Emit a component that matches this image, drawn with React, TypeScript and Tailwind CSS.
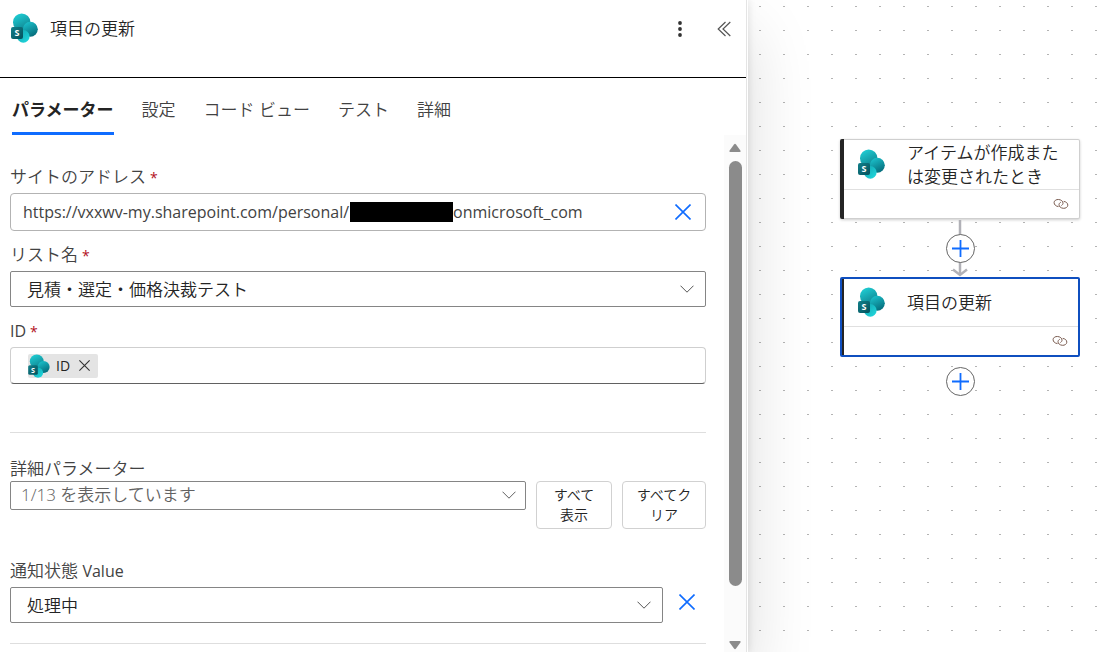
import { useId, useState } from "react";
import type { ReactNode } from "react";
import clsx from "clsx";

const tabs = ["パラメーター", "設定", "コード ビュー", "テスト", "詳細"];

function SharePointIcon({ className }: { className?: string }) {
  const id = useId();

  return (
    <svg viewBox="0 0 27 30" className={className} aria-hidden="true">
      <defs>
        <linearGradient id={`${id}a`} x1="0.2" y1="0" x2="0.7" y2="1">
          <stop offset="0" stopColor="#1fd0d6" />
          <stop offset="1" stopColor="#0f7f8c" />
        </linearGradient>
        <linearGradient id={`${id}b`} x1="0.2" y1="0" x2="0.7" y2="1">
          <stop offset="0" stopColor="#1cc3cd" />
          <stop offset="1" stopColor="#056a79" />
        </linearGradient>
        <linearGradient id={`${id}c`} x1="0" y1="0" x2="1" y2="1">
          <stop offset="0" stopColor="#0fa3ae" />
          <stop offset="1" stopColor="#22dbe0" />
        </linearGradient>
        <linearGradient id={`${id}d`} x1="0" y1="0" x2="1" y2="1">
          <stop offset="0" stopColor="#12808a" />
          <stop offset="1" stopColor="#04515c" />
        </linearGradient>
      </defs>
      <circle cx="10.7" cy="9.2" r="8.7" fill={`url(#${id}a)`} />
      <circle cx="19.3" cy="16.2" r="7.5" fill={`url(#${id}b)`} />
      <circle cx="12.3" cy="23.4" r="6.3" fill={`url(#${id}c)`} />
      <rect x="0" y="14" width="12" height="12" rx="2" fill={`url(#${id}d)`} />
      <text x="6" y="23.2" textAnchor="middle" fill="#fff" fontSize="9" fontWeight="700" fontFamily="Open Sans, sans-serif">
        S
      </text>
    </svg>
  );
}

function ChevronDown({ className }: { className?: string }) {
  return (
    <svg viewBox="0 0 14 8" className={clsx("pointer-events-none absolute h-2 w-3.5", className)} fill="none" stroke="currentColor" aria-hidden="true">
      <path d="M0.5 0.7 7 7.2l6.5-6.5" />
    </svg>
  );
}

function CloseIcon({ className }: { className?: string }) {
  return (
    <svg viewBox="0 0 16 16" className={className} fill="none" stroke="currentColor" strokeWidth="1.6" aria-hidden="true">
      <path d="M0.5 0.5l15 15M15.5 0.5l-15 15" />
    </svg>
  );
}

function FieldLabel({ htmlFor, required, children }: { htmlFor: string; required?: boolean; children: ReactNode }) {
  return (
    <label htmlFor={htmlFor} className="block leading-6 text-[#424242]">
      {children}
      {required && <span className="ml-1 text-[14px] leading-none font-normal text-[#b10e1c]">*</span>}
    </label>
  );
}

function ScrollBar() {
  return (
    <div className="flex w-[22px] shrink-0 flex-col items-center gap-2 bg-[#fbfbfb] pt-2 pb-0.5 text-[#8b8b8b]" aria-hidden="true">
      <svg viewBox="0 0 12 10" className="h-2.5 w-3" fill="currentColor">
        <path d="M5 1.4q1-1.2 2 0l4.4 6q.8 1.6-.8 1.6H1.4q-1.6 0-.8-1.6z" />
      </svg>
      <div className="min-h-0 w-[13px] flex-1 rounded-full bg-[#8b8b8b]" />
      <div className="h-[38px]" />
      <svg viewBox="0 0 12 10" className="h-2.5 w-3" fill="currentColor">
        <path d="M5 8.6q1 1.2 2 0l4.4-6q.8-1.6-.8-1.6H1.4q-1.6 0-.8 1.6z" />
      </svg>
    </div>
  );
}

function Panel() {
  const [active, setActive] = useState(tabs[0]);
  const [address, setAddress] = useState(
    "https://vxxwv-my.sharepoint.com/personal/\u2003\u2003\u2003\u2003\u2003\u2003\u2002onmicrosoft_com"
  );

  return (
    <section className="z-10 flex h-full w-[67.7%] shrink-0 flex-col border-r border-white bg-white shadow-[0_0_8px_rgba(0,0,0,0.12),0_32px_64px_rgba(0,0,0,0.14)]">
      <div className="flex min-h-0 flex-1 flex-col border-r border-[#e4e4e4]">
        <header className="flex h-[78px] shrink-0 items-start border-b border-black pt-[13px] pr-1.5 pl-[11px]">
          <SharePointIcon className="h-[30px] w-[27px]" />
          <h1 className="ml-3 flex-1 leading-8 text-[#242424]">項目の更新</h1>
          <button type="button" aria-label="その他" className="flex size-8 items-center justify-center text-[#333]">
            <svg viewBox="0 0 4 16" className="h-4 w-1" fill="currentColor" aria-hidden="true">
              <circle cx="2" cy="2" r="1.9" />
              <circle cx="2" cy="8" r="1.9" />
              <circle cx="2" cy="14" r="1.9" />
            </svg>
          </button>
          <button type="button" aria-label="折りたたむ" className="ml-3 flex size-8 items-center justify-center text-[#555]">
            <svg viewBox="0 0 14 16" className="h-4 w-3.5" fill="none" stroke="currentColor" strokeWidth="1.2" aria-hidden="true">
              <path d="M8.5 1 1.2 8l7.3 7M13.3 1 6 8l7.3 7" />
            </svg>
          </button>
        </header>

        <div role="tablist" className="flex h-[57px] shrink-0 gap-7 pl-3">
          {tabs.map((tab) => (
            <button
              key={tab}
              type="button"
              role="tab"
              aria-selected={tab === active}
              onClick={() => setActive(tab)}
              className={clsx(
                "border-b-3 pt-2.5 pb-0 whitespace-nowrap",
                tab === active ? "border-[#0f6cff] font-bold text-[#242424]" : "border-transparent text-[#424242]"
              )}
            >
              {tab}
            </button>
          ))}
        </div>

        <div className="flex min-h-0 flex-1">
          <form className="min-w-0 flex-1 overflow-hidden pt-[30px] pr-[18px] pl-2.5">
            <FieldLabel htmlFor="site" required>サイトのアドレス</FieldLabel>
            <div className="relative mt-1 flex h-[38px] items-center rounded-[4px] border border-[#b3b3b3] pr-3">
              <input
                id="site"
                value={address}
                onChange={(e) => setAddress(e.target.value)}
                className="h-full min-w-0 flex-1 pl-3 font-['Open_Sans'] text-[16px] font-normal text-[#424242] outline-none"
              />
              <div className="absolute top-2 left-[339px] h-5 w-[103px] bg-black" />
              <button type="button" aria-label="クリア" className="flex size-5 items-center justify-center text-[#0f6cff]">
                <CloseIcon className="size-4" />
              </button>
            </div>

            <div className="mt-3">
              <FieldLabel htmlFor="list" required>リスト名</FieldLabel>
              <div className="relative mt-1">
                <select id="list" className="h-9 w-full appearance-none rounded-[2px] border border-[#858585] bg-white pt-0.5 pl-4 text-[#242424]">
                  <option>見積・選定・価格決裁テスト</option>
                </select>
                <ChevronDown className="top-3.5 right-3 text-[#555]" />
              </div>
            </div>

            <div className="mt-3">
              <FieldLabel htmlFor="item-id" required>
                <span className="text-[16px] leading-none font-normal">ID</span>
              </FieldLabel>
              <div className="mt-1 flex h-[37px] items-center rounded-[4px] border border-[#cfcfcf] border-b-[#616161] pl-[17px]">
                <span className="flex h-6 items-center rounded-[2px] bg-[#e4e4e4] pr-2">
                  <SharePointIcon className="h-6 w-[22px]" />
                  <span className="ml-1.5 font-['Open_Sans'] text-[14px] font-normal text-[#242424]">ID</span>
                  <button type="button" aria-label="ID を削除" className="ml-2 flex size-3 items-center justify-center text-[#333]">
                    <CloseIcon className="size-[11px]" />
                  </button>
                </span>
                <input id="item-id" className="h-full min-w-0 flex-1 px-2 outline-none" />
              </div>
            </div>

            <hr className="mt-12 border-[#dedede]" />

            <div className="mt-6">
              <FieldLabel htmlFor="advanced">詳細パラメーター</FieldLabel>
              <div className="flex items-start gap-2.5">
                <div className="relative flex-1">
                  <select id="advanced" className="h-[29px] w-full appearance-none rounded-[2px] border border-[#858585] bg-white pb-0.5 pl-2.5 text-[#616161]">
                    <option>1/13 を表示しています</option>
                  </select>
                  <ChevronDown className="top-2.5 right-2.5 text-[#616161]" />
                </div>
                <button type="button" className="h-12 w-[76px] rounded-[4px] border border-[#d1d1d1] px-4 text-[14px] leading-5 text-[#242424]">
                  すべて表示
                </button>
                <button type="button" className="h-12 w-[84px] rounded-[4px] border border-[#d1d1d1] px-3 text-[14px] leading-5 text-[#242424]">
                  すべてクリア
                </button>
              </div>
            </div>

            <div className="mt-[30px]">
              <FieldLabel htmlFor="status">
                通知状態 <span className="text-[16px] leading-none font-normal">Value</span>
              </FieldLabel>
              <div className="mt-1 flex items-center">
                <div className="relative flex-1">
                  <select id="status" className="h-9 w-full appearance-none rounded-[2px] border border-[#858585] bg-white pt-0.5 pl-4 text-[#242424]">
                    <option>処理中</option>
                  </select>
                  <ChevronDown className="top-3.5 right-3 text-[#555]" />
                </div>
                <button type="button" aria-label="パラメーターを削除" className="mr-[9px] mb-1.5 ml-3.5 flex size-5 items-center justify-center text-[#0f6cff]">
                  <CloseIcon className="size-4" />
                </button>
              </div>
            </div>

            <hr className="mt-5 border-[#dedede]" />
          </form>
          <ScrollBar />
        </div>
      </div>
    </section>
  );
}

function AddButton() {
  return (
    <button type="button" aria-label="アクションの追加" className="flex size-[29px] items-center justify-center rounded-full border border-[#666] bg-white text-[#0f6cff]">
      <svg viewBox="0 0 17 17" className="size-[17px]" stroke="currentColor" strokeWidth="1.8" aria-hidden="true">
        <path d="M8.5 0v17M0 8.5h17" />
      </svg>
    </button>
  );
}

function NodeCard({ title, selected }: { title: string; selected?: boolean }) {
  return (
    <article
      className={clsx(
        "flex h-20 w-60 rounded-[2px] bg-white",
        selected ? "border-2 border-[#0f4fbf]" : "border border-l-0 border-[#cfcfcf] shadow-[0_1px_3px_rgba(0,0,0,0.2)]"
      )}
    >
      <div className={clsx("bg-[#242424]", selected ? "w-0.5" : "-my-px w-1 rounded-l-[2px]")} />
      <div className="flex flex-1 flex-col">
        <div className="flex flex-1 items-center border-b border-[#e0e0e0] pl-3.5">
          <SharePointIcon className="mb-0.5 h-[30px] w-[27px]" />
          <h2 className="ml-[22px] w-40 leading-6 text-[#242424]">{title}</h2>
        </div>
        <div className="flex h-7 items-center justify-end pr-2.5">
          <svg viewBox="0 0 16 12" className="h-3 w-4" fill="none" stroke="#7a5c50" aria-hidden="true">
            <path d="M5.5 8.6C2.9 8.3 1 6.6 1.1 4.5 1.2 2.6 3.2 1.3 5.6 1.5c2.6.2 4.5 1.8 4.4 3.7 0 1-.6 1.8-1.6 2.3" />
            <path d="M10.7 3.4c2.4.3 4.2 1.8 4.1 3.8-.1 1.9-2 3.3-4.5 3.1C7.8 10.1 5.9 8.5 6 6.6c.1-1 .8-1.9 1.8-2.4" />
          </svg>
        </div>
      </div>
    </article>
  );
}

function Canvas() {
  return (
    <main className="relative min-w-0 flex-1 overflow-hidden bg-white">
      <svg className="absolute inset-0 size-full" aria-hidden="true">
        <defs>
          <pattern id="grid" width="24" height="24" patternUnits="userSpaceOnUse">
            <rect x="11" y="6" width="2" height="1" fill="#b4b4b4" />
          </pattern>
        </defs>
        <rect width="100%" height="100%" fill="url(#grid)" />
      </svg>

      <div className="absolute top-[139px] left-[92px] flex flex-col items-center">
        <NodeCard title="アイテムが作成または変更されたとき" />
        <div className="relative flex h-[58px] w-8 items-center justify-center">
          <svg viewBox="0 0 32 58" className="absolute inset-0 h-full w-full" fill="none" stroke="#b1b1b7" aria-hidden="true">
            <path d="M16 1v54" strokeWidth="2.5" />
            <path d="M9 50.5 16 56l7-5.5" strokeWidth="2.5" />
          </svg>
          <div className="relative">
            <AddButton />
          </div>
        </div>
        <NodeCard title="項目の更新" selected />
        <div className="mt-2.5">
          <AddButton />
        </div>
      </div>
    </main>
  );
}

export default function App() {
  return (
    <div className="flex h-screen overflow-hidden bg-white font-['Open_Sans','Noto_Sans_CJK_JP',sans-serif] text-[17px] font-[350]">
      <Panel />
      <Canvas />
    </div>
  );
}
